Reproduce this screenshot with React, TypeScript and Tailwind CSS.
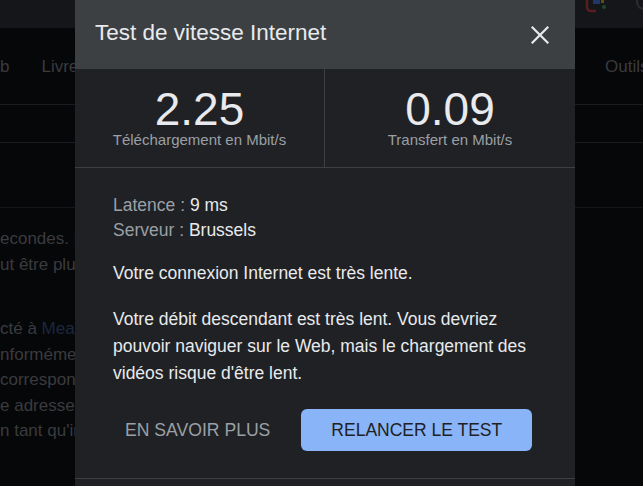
import React from 'react';

const font = { fontFamily: '"Liberation Sans", Arial, sans-serif' };

function CloseIcon() {
    return (
        <svg width="18" height="18" viewBox="0 0 18 18" fill="none" stroke="#e8eaed" strokeWidth={2.2} strokeLinecap="square">
            <path d="M1.5 1.5L16.5 16.5M16.5 1.5L1.5 16.5" />
        </svg>
    );
}

function Stat({ value, label, divider }: { value: string; label: string; divider?: boolean }) {
    return (
        <div className={`flex flex-col items-center pt-[16px] pb-[17px] ${divider ? 'border-r border-[#3c4043]' : ''}`}>
            <span className="text-[46px] leading-[48px] text-[#e8eaed]">{value}</span>
            <span className="text-[15px] leading-[20px] text-[#9aa0a6] mt-[-3px]">{label}</span>
        </div>
    );
}

// page sitting behind the dialog, already dimmed by the scrim
function BackgroundPage() {
    return (
        <div className="w-full h-full bg-[#060709] text-[17px] text-[#3a3b3e] whitespace-nowrap overflow-hidden">
            <div className="h-[28px] bg-[#15161a] relative">
                <svg className="absolute left-[584px] top-0" width="26" height="14" viewBox="0 0 26 14">
                    <path d="M3 0V7a4 4 0 0 0 4 4h5" stroke="#5a1f1c" strokeWidth="2.5" fill="none" />
                    <rect x="9" y="0" width="7" height="4" fill="#1f3766" />
                    <rect x="17" y="0" width="3" height="3" fill="#5c4d14" />
                    <circle cx="20" cy="7" r="2" fill="#1d4a2a" />
                </svg>
                <svg className="absolute left-[634px] top-0" width="12" height="14" viewBox="0 0 12 14">
                    <circle cx="10" cy="2" r="7" stroke="#2b2c30" strokeWidth="2" fill="none" />
                </svg>
            </div>
            <div className="h-[77px] border-b border-[#1b1c1f] flex items-center justify-between pt-[2px]">
                <div className="flex gap-[32px] w-[75px] overflow-hidden">
                    <span>b</span>
                    <span>Livres</span>
                </div>
                <span className="w-[38px] overflow-hidden">Outils</span>
            </div>
            <div className="h-[38px] border-b border-[#1b1c1f]" />
            <div className="h-[65px] border-b border-[#151619]" />
            <div className="pt-[18px] leading-[25.5px] w-[75px] overflow-hidden">
                <div>econdes. Le test</div>
                <div>ut être plus long</div>
                <div className="mt-[39px]">
                    cté à <span className="text-[#1c2740]">Measurement</span>
                </div>
                <div>nformément</div>
                <div>correspondantes</div>
                <div>e adresse IP</div>
                <div>n tant qu'information</div>
            </div>
        </div>
    );
}

export default function App() {
    return (
        <div className="relative w-[643px] h-[486px] overflow-hidden" style={font}>
            <BackgroundPage />

            {/* --- DIALOG --- */}
            <div className="absolute left-[75px] top-0 w-[500px] h-[520px] bg-[#202124]">
                <div className="h-[69px] bg-[#3c4043] flex items-center justify-between pl-[20px] pr-[26px]">
                    <h1 className="text-[22.5px] text-[#e8eaed] leading-none pb-[2px]">Test de vitesse Internet</h1>
                    <CloseIcon />
                </div>

                <div className="grid grid-cols-2 border-b border-[#3c4043]">
                    <Stat value="2.25" label="Téléchargement en Mbit/s" divider />
                    <Stat value="0.09" label="Transfert en Mbit/s" />
                </div>

                <div className="px-[38px] pt-[25px] pb-[27px] border-b border-[#3c4043] text-[17.5px] text-[#e8eaed]">
                    <div className="leading-[25px]">
                        <div><span className="text-[#9aa0a6]">Latence : </span>9 ms</div>
                        <div><span className="text-[#9aa0a6]">Serveur : </span>Brussels</div>
                    </div>
                    <p className="mt-[17px] leading-[27px]">Votre connexion Internet est très lente.</p>
                    <p className="mt-[19px] leading-[27px]">
                        Votre débit descendant est très lent. Vous devriez<br />
                        pouvoir naviguer sur le Web, mais le chargement des<br />
                        vidéos risque d'être lent.
                    </p>
                    <div className="mt-[22px] flex items-center gap-[19px]">
                        <button className="h-[42px] px-[12px] text-[17.6px] text-[#9aa0a6]">EN SAVOIR PLUS</button>
                        <button className="h-[42px] px-[30px] rounded-[6px] bg-[#8ab4f8] text-[17.5px] text-[#202124]">
                            RELANCER LE TEST
                        </button>
                    </div>
                </div>
            </div>
        </div>
    );
}
